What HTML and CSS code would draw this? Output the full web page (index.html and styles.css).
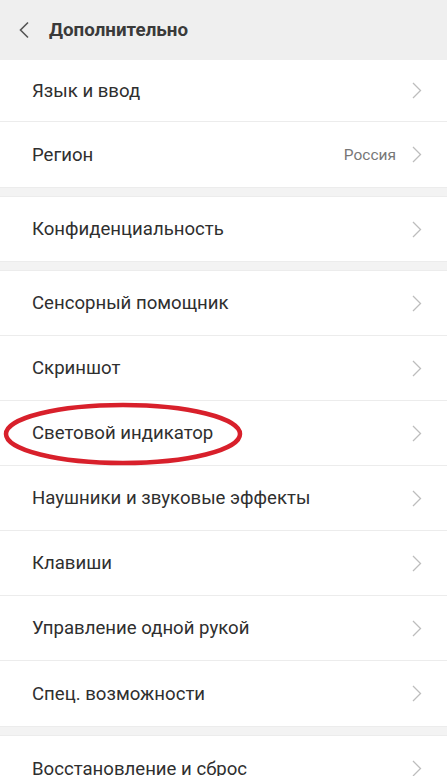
FILE: index.html
```html
<!DOCTYPE html>
<html lang="ru">
<head>
<meta charset="utf-8">
<link rel="stylesheet" href="styles.css">
</head>
<body>
<div class="screen">
  <header class="bar">
    <svg class="back" width="12" height="18" viewBox="0 0 12 18"><path d="M10 1.5 L2.5 9 L10 16.5" fill="none" stroke="#555" stroke-width="1.6"/></svg>
    <h1 class="title">Дополнительно</h1>
  </header>

  <section class="group">
    <div class="row top"><span class="label">Язык и ввод</span><svg class="chev" width="10" height="17" viewBox="0 0 10 17"><path d="M1 1 L8.5 8.5 L1 16" fill="none" stroke="#bdbdbd" stroke-width="1.3"/></svg></div>
    <div class="row"><span class="label">Регион</span><span class="value">Россия</span><svg class="chev" width="10" height="17" viewBox="0 0 10 17"><path d="M1 1 L8.5 8.5 L1 16" fill="none" stroke="#bdbdbd" stroke-width="1.3"/></svg></div>
  </section>
  <div class="gap"></div>
  <section class="group">
    <div class="row short"><span class="label">Конфиденциальность</span><svg class="chev" width="10" height="17" viewBox="0 0 10 17"><path d="M1 1 L8.5 8.5 L1 16" fill="none" stroke="#bdbdbd" stroke-width="1.3"/></svg></div>
  </section>
  <div class="gap"></div>
  <section class="group">
    <div class="row"><span class="label">Сенсорный помощник</span><svg class="chev" width="10" height="17" viewBox="0 0 10 17"><path d="M1 1 L8.5 8.5 L1 16" fill="none" stroke="#bdbdbd" stroke-width="1.3"/></svg></div>
    <div class="row"><span class="label">Скриншот</span><svg class="chev" width="10" height="17" viewBox="0 0 10 17"><path d="M1 1 L8.5 8.5 L1 16" fill="none" stroke="#bdbdbd" stroke-width="1.3"/></svg></div>
    <div class="row"><span class="label">Световой индикатор</span><svg class="chev" width="10" height="17" viewBox="0 0 10 17"><path d="M1 1 L8.5 8.5 L1 16" fill="none" stroke="#bdbdbd" stroke-width="1.3"/></svg>
      <svg class="ring" width="242" height="66" viewBox="0 0 242 66"><ellipse cx="121" cy="33" rx="117" ry="29" fill="none" stroke="#d8202b" stroke-width="4.5"/></svg>
    </div>
    <div class="row"><span class="label">Наушники и звуковые эффекты</span><svg class="chev" width="10" height="17" viewBox="0 0 10 17"><path d="M1 1 L8.5 8.5 L1 16" fill="none" stroke="#bdbdbd" stroke-width="1.3"/></svg></div>
    <div class="row"><span class="label">Клавиши</span><svg class="chev" width="10" height="17" viewBox="0 0 10 17"><path d="M1 1 L8.5 8.5 L1 16" fill="none" stroke="#bdbdbd" stroke-width="1.3"/></svg></div>
    <div class="row"><span class="label">Управление одной рукой</span><svg class="chev" width="10" height="17" viewBox="0 0 10 17"><path d="M1 1 L8.5 8.5 L1 16" fill="none" stroke="#bdbdbd" stroke-width="1.3"/></svg></div>
    <div class="row"><span class="label">Спец. возможности</span><svg class="chev" width="10" height="17" viewBox="0 0 10 17"><path d="M1 1 L8.5 8.5 L1 16" fill="none" stroke="#bdbdbd" stroke-width="1.3"/></svg></div>
  </section>
  <div class="gap"></div>
  <section class="group">
    <div class="row"><span class="label">Восстановление и сброс</span><svg class="chev" width="10" height="17" viewBox="0 0 10 17"><path d="M1 1 L8.5 8.5 L1 16" fill="none" stroke="#bdbdbd" stroke-width="1.3"/></svg></div>
  </section>
</div>
</body>
</html>
```
FILE: styles.css
```css
* { box-sizing: border-box; }
html, body { margin: 0; padding: 0; }
body {
  width: 447px;
  height: 776px;
  overflow: hidden;
  background: #fff;
  font-family: Roboto, "Noto Sans", "Liberation Sans", sans-serif;
  color: #333;
}
.screen { display: flex; flex-direction: column; }
.bar {
  height: 60px;
  background: #efefef;
  display: flex;
  align-items: center;
  padding-left: 18px;
  gap: 19px;
}
.back { display: block; }
.title {
  margin: 0;
  font-size: 18.8px;
  font-weight: 700;
  color: #3a3a3a;
}
.group { display: flex; flex-direction: column; background: #fff; }
.row {
  position: relative;
  height: 65px;
  display: flex;
  align-items: center;
  padding: 0 25px 0 32px;
  border-bottom: 1px solid #ececec;
}
.row.top { height: 62px; }
.row.short { height: 64px; }
.group .row:last-child { border-bottom: none; }
.label { flex: 1; font-size: 18.6px; color: #2f2f2f; }
.value { font-size: 15.5px; color: #777; margin-right: 16px; }
.chev { display: block; flex: none; }
.gap {
  height: 10px;
  background: #f3f3f3;
  border-top: 1px solid #ececec;
  border-bottom: 1px solid #ececec;
}
.ring {
  position: absolute;
  left: 2px;
  top: 0;
}
```
